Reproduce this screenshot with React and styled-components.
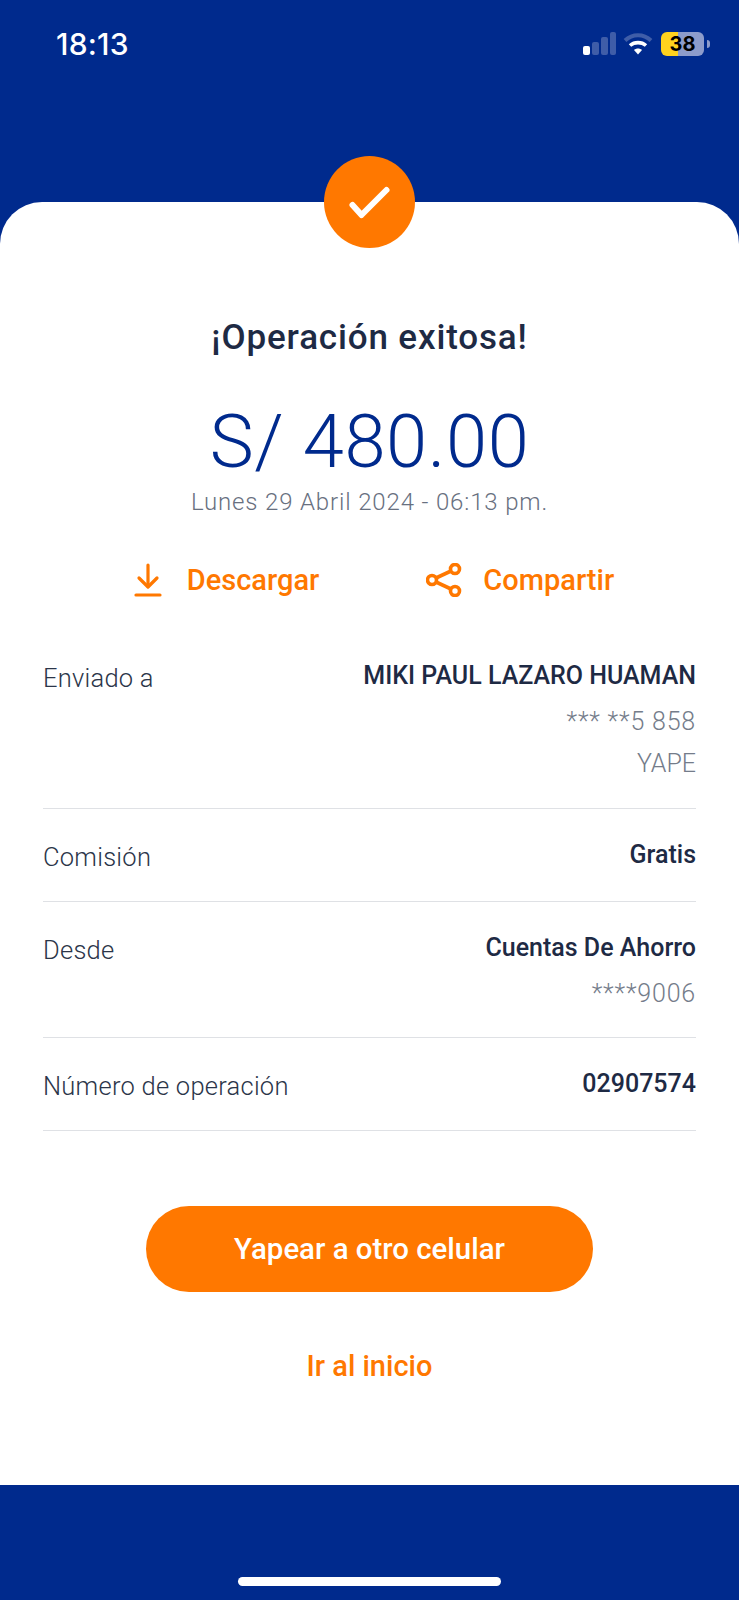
import styled, { createGlobalStyle } from "styled-components";

const GlobalStyle = createGlobalStyle`
  * { box-sizing: border-box; }
  html, body { margin: 0; padding: 0; background: #002a8d; }
  body { font-family: "Roboto", "Liberation Sans", sans-serif; }
`;

const Page = styled.div`
  width: 739px;
  height: 1600px;
  background: #002a8d;
  display: flex;
  flex-direction: column;
`;

const StatusBar = styled.div`
  height: 202px;
  padding: 27px 35px 0 56px;
  display: flex;
  justify-content: space-between;
  align-items: flex-start;
`;

const Clock = styled.span`
  color: #fff;
  font-size: 30px;
  line-height: 34px;
  font-weight: 500;
  font-family: "Inter", sans-serif;
  letter-spacing: 0.2px;
`;

const StatusIcons = styled.div`
  display: flex;
  align-items: center;
  gap: 9px;
  height: 34px;
`;

const SignalSvg = styled.svg`
  margin-right: -2px;
`;

const Battery = styled.div`
  margin-left: -1px;
  width: 43px;
  height: 24px;
  border-radius: 6px;
  background: linear-gradient(to right, #ffd21e 0 40%, #8d9ccb 40% 100%);
  color: #000;
  font-size: 20px;
  font-weight: 700;
  font-family: "Inter", sans-serif;
  display: flex;
  align-items: center;
  justify-content: center;
  position: relative;
  &::after {
    content: "";
    position: absolute;
    right: -6px;
    top: 8px;
    width: 3px;
    height: 8px;
    border-radius: 0 3px 3px 0;
    background: #8d9ccb;
  }
`;

const Card = styled.main`
  position: relative;
  height: 1283px;
  background: #fff;
  border-radius: 42px 42px 0 0;
  padding: 114px 43px 0;
  display: flex;
  flex-direction: column;
  align-items: center;
`;

const CheckBadge = styled.div`
  position: absolute;
  top: -46px;
  left: 324px;
  width: 91px;
  height: 92px;
  border-radius: 50%;
  background: #ff7800;
  display: flex;
  align-items: center;
  justify-content: center;
`;

const Title = styled.h1`
  margin: 0;
  color: #1e2a44;
  font-size: 35px;
  line-height: 44px;
  font-weight: 500;
  letter-spacing: 0.85px;
`;

const Amount = styled.div`
  margin-top: 43px;
  color: #002a8d;
  font-size: 74px;
  line-height: 78px;
  font-weight: 300;
  letter-spacing: 0.6px;
`;

const DateText = styled.div`
  margin-top: 6px;
  color: #68707f;
  font-size: 24px;
  line-height: 30px;
  font-weight: 300;
  letter-spacing: 0.85px;
`;

const Actions = styled.div`
  margin: 45px 0 0 9px;
  display: flex;
  gap: 107px;
`;

const ActionLink = styled.a`
  display: flex;
  align-items: center;
  gap: ${(p) => p.$gap}px;
  color: #ff7800;
  font-size: 29px;
  line-height: 36px;
  font-weight: 500;
`;

const Details = styled.dl`
  margin: 53px 0 0;
  width: 653px;
`;

const Row = styled.div`
  height: ${(p) => p.$height}px;
  padding-top: 9px;
  display: flex;
  justify-content: space-between;
  border-bottom: 1.5px solid #dfe1e5;
  & + & { padding-top: 30px; }
`;

const Label = styled.dt`
  padding-top: 1px;
  color: #2b3549;
  font-size: 25.5px;
  line-height: 34px;
  font-weight: 300;
  letter-spacing: 0.25px;
`;

const Values = styled.dd`
  margin: 0;
  text-align: right;
  display: flex;
  flex-direction: column;
`;

const Primary = styled.span`
  margin-bottom: 14px;
  color: #1e2a44;
  font-size: 25px;
  line-height: 32px;
  font-weight: 500;
`;

const Secondary = styled.span`
  color: #747c8a;
  font-size: 25px;
  line-height: 32px;
  font-weight: 300;
  & + & { margin-top: 10px; }
`;

const Masked = styled(Secondary)`
  letter-spacing: 0.8px;
`;

const MainButton = styled.button`
  margin-top: 75px;
  width: 447px;
  height: 86px;
  border: 0;
  border-radius: 43px;
  background: #ff7800;
  color: #fff;
  font-family: inherit;
  font-size: 29.4px;
  font-weight: 500;
`;

const HomeLink = styled.a`
  margin-top: 56px;
  color: #ff7800;
  font-size: 29px;
  line-height: 36px;
  font-weight: 500;
`;

const Footer = styled.div`
  flex: 1;
  display: flex;
  justify-content: center;
  padding-top: 92px;
`;

const HomeIndicator = styled.div`
  width: 263px;
  height: 9px;
  border-radius: 5px;
  background: #fff;
`;

const SignalIcon = () => (
  <SignalSvg width="34" height="24" viewBox="0 0 34 24">
    <rect x="1" y="14" width="7" height="9" rx="2" fill="#fff" />
    <rect x="10" y="10" width="7" height="13" rx="2" fill="#3f5da8" />
    <rect x="19" y="5" width="7" height="18" rx="2" fill="#3f5da8" />
    <rect x="28" y="0" width="6" height="23" rx="2" fill="#3f5da8" />
  </SignalSvg>
);

const WifiIcon = () => (
  <svg width="30" height="24" viewBox="0 0 30 24" fill="none">
    <path d="M2 8.5C9.5 1.5 20.5 1.5 28 8.5" stroke="#3f5da8" strokeWidth="4" />
    <path d="M7 13.5C11.5 9.6 18.5 9.6 23 13.5" stroke="#fff" strokeWidth="3.6" />
    <path d="M11 18C13.2 16 16.8 16 19 18L15 22.5Z" fill="#fff" />
  </svg>
);

const CheckIcon = () => (
  <svg width="44" height="36" viewBox="0 0 44 36" fill="none">
    <path d="M4.5 21L13.5 31L38.5 6" stroke="#fff" strokeWidth="6" strokeLinecap="round" strokeLinejoin="round" />
  </svg>
);

const DownloadIcon = () => (
  <svg width="28" height="34" viewBox="0 0 28 34" fill="none" stroke="#ff7800" strokeWidth="3.2" strokeLinecap="round" strokeLinejoin="round">
    <path d="M14 2V23" />
    <path d="M5 15L14 24L23 15" />
    <path d="M2 32H26" />
  </svg>
);

const ShareIcon = () => (
  <svg width="36" height="34" viewBox="0 0 36 34" fill="none" stroke="#ff7800" strokeWidth="3.6">
    <circle cx="29" cy="6" r="4.5" />
    <circle cx="6" cy="17" r="4.5" />
    <circle cx="29" cy="28" r="4.5" />
    <path d="M10 15L25 8" />
    <path d="M10 19L25 26" />
  </svg>
);

export default function App() {
  return (
    <Page>
      <GlobalStyle />
      <StatusBar>
        <Clock>18:13</Clock>
        <StatusIcons>
          <SignalIcon />
          <WifiIcon />
          <Battery>38</Battery>
        </StatusIcons>
      </StatusBar>
      <Card>
        <CheckBadge>
          <CheckIcon />
        </CheckBadge>
        <Title>¡Operación exitosa!</Title>
        <Amount>S/ 480.00</Amount>
        <DateText>Lunes 29 Abril 2024 - 06:13 pm.</DateText>
        <Actions>
          <ActionLink $gap={25}>
            <DownloadIcon />
            Descargar
          </ActionLink>
          <ActionLink $gap={21}>
            <ShareIcon />
            Compartir
          </ActionLink>
        </Actions>
        <Details>
          <Row $height={158}>
            <Label>Enviado a</Label>
            <Values>
              <Primary>MIKI PAUL LAZARO HUAMAN</Primary>
              <Masked>*** **5 858</Masked>
              <Secondary>YAPE</Secondary>
            </Values>
          </Row>
          <Row $height={93}>
            <Label>Comisión</Label>
            <Values>
              <Primary>Gratis</Primary>
            </Values>
          </Row>
          <Row $height={136}>
            <Label>Desde</Label>
            <Values>
              <Primary>Cuentas De Ahorro</Primary>
              <Masked>****9006</Masked>
            </Values>
          </Row>
          <Row $height={93}>
            <Label>Número de operación</Label>
            <Values>
              <Primary>02907574</Primary>
            </Values>
          </Row>
        </Details>
        <MainButton>Yapear a otro celular</MainButton>
        <HomeLink>Ir al inicio</HomeLink>
      </Card>
      <Footer>
        <HomeIndicator />
      </Footer>
    </Page>
  );
}
